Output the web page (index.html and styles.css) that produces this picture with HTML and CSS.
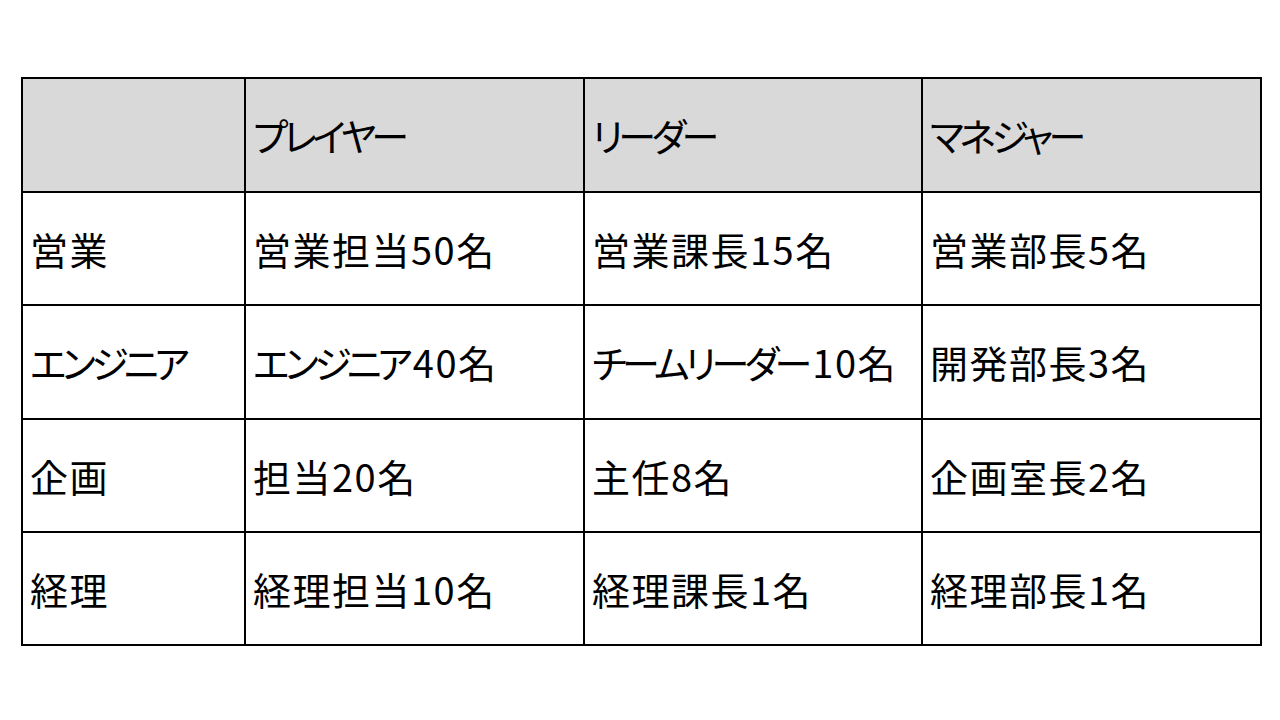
FILE: index.html
```html
<!DOCTYPE html>
<html lang="ja">
<head>
<meta charset="utf-8">
<title>組織表</title>
<link rel="stylesheet" href="styles.css">
</head>
<body>
<div class="table">
  <div class="cell head"></div>
  <div class="cell head"><span class="kana">プレイヤー</span></div>
  <div class="cell head"><span class="kana">リーダー</span></div>
  <div class="cell head"><span class="kana">マネジャー</span></div>

  <div class="cell">営業</div>
  <div class="cell">営業担当50名</div>
  <div class="cell">営業課長15名</div>
  <div class="cell">営業部長5名</div>

  <div class="cell"><span class="kana">エンジニア</span></div>
  <div class="cell"><span class="kana">エンジニア</span>40名</div>
  <div class="cell"><span class="kana">チームリーダー</span>10名</div>
  <div class="cell">開発部長3名</div>

  <div class="cell">企画</div>
  <div class="cell">担当20名</div>
  <div class="cell">主任8名</div>
  <div class="cell">企画室長2名</div>

  <div class="cell">経理</div>
  <div class="cell">経理担当10名</div>
  <div class="cell">経理課長1名</div>
  <div class="cell">経理部長1名</div>
</div>
</body>
</html>
```

FILE: styles.css
```css
html, body {
  margin: 0;
  padding: 0;
  background: #ffffff;
}

body {
  font-family: "Noto Sans CJK JP", "Noto Sans", sans-serif;
  color: #000000;
}

.table {
  display: grid;
  grid-template-columns: 221px 337px 336px 337px;
  grid-template-rows: 112px 111px 112px 111px 111px;
  gap: 2px;
  padding: 2px;
  background: #000000;
  width: max-content;
  margin: 77px 0 0 21px;
}

.cell {
  background: #ffffff;
  display: flex;
  align-items: center;
  padding-left: 7px;
  font-size: 38px;
  line-height: 1;
  letter-spacing: 1.5px;
  white-space: nowrap;
}

.cell.head {
  background: #d9d9d9;
}

.kana {
  font-feature-settings: "palt";
  letter-spacing: -4.5px;
  margin-right: 4.5px;
}
```
